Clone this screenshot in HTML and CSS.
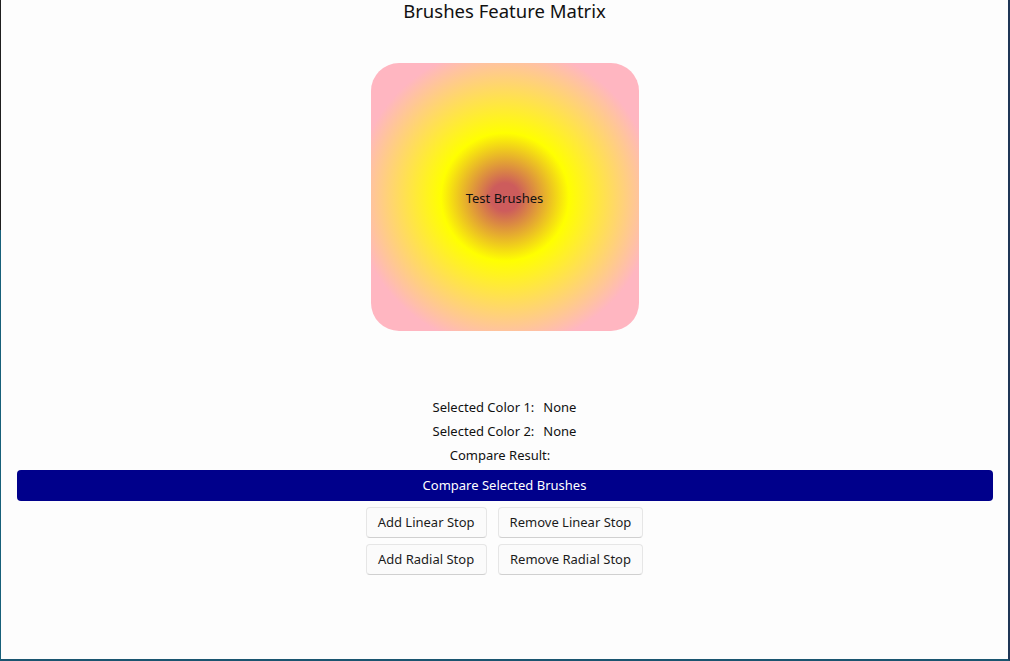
FILE: index.html
```html
<!DOCTYPE html>
<html lang="en">
<head>
<meta charset="utf-8">
<title>Brushes Feature Matrix</title>
<link rel="stylesheet" href="styles.css">
</head>
<body>
<div class="window">
  <div class="edge-dark"></div>
  <h1 class="title">Brushes Feature Matrix</h1>
  <div class="stage">
    <div class="brush-box"><span class="brush-label">Test Brushes</span></div>
  </div>
  <div class="info">
    <div class="info-row"><span>Selected Color 1:</span><span>None</span></div>
    <div class="info-row"><span>Selected Color 2:</span><span>None</span></div>
    <div class="info-row"><span>Compare Result:</span><span></span></div>
  </div>
  <button class="primary">Compare Selected Brushes</button>
  <div class="btn-grid">
    <button class="btn">Add Linear Stop</button>
    <button class="btn">Remove Linear Stop</button>
    <button class="btn">Add Radial Stop</button>
    <button class="btn">Remove Radial Stop</button>
  </div>
</div>
</body>
</html>
```

FILE: styles.css
```css
* { box-sizing: border-box; }
html, body {
  margin: 0;
  padding: 0;
  background: #fdfdfd;
}
body {
  font-family: "Segoe UI", "Noto Sans", "Open Sans", sans-serif;
  color: #1b1b1b;
  font-size: 13px;
}
.window {
  position: relative;
  width: 1010px;
  height: 661px;
  border-left: 1px solid #17607a;
  border-right: 2px solid #1e3555;
  border-bottom: 2px solid #1a5570;
  display: flex;
  flex-direction: column;
  align-items: center;
  padding: 0 16px;
}
.edge-dark {
  position: absolute;
  left: -1px;
  top: 0;
  width: 1px;
  height: 230px;
  background: #1f1f1f;
}
.title {
  margin: 0;
  font-size: 18.5px;
  font-weight: 400;
  line-height: 22px;
  height: 22px;
  color: #111;
}
.stage {
  margin-top: 41px;
}
.brush-box {
  width: 268px;
  height: 268px;
  border-radius: 28px;
  background: radial-gradient(circle farthest-corner at 50% 50%, #cd5c5c 0px, #cd5c5c 14px, #ffff00 64px, #ffb6c1 150px);
  display: flex;
  align-items: center;
  justify-content: center;
}
.brush-label {
  color: #111;
  font-size: 13px;
  line-height: 18px;
  margin-top: 2px;
}
.info {
  margin-top: 64px;
  display: flex;
  flex-direction: column;
  align-items: center;
}
.info-row {
  display: flex;
  gap: 9px;
  height: 24px;
  line-height: 24px;
  font-size: 13px;
  color: #111;
}
.primary {
  margin-top: 3px;
  width: 976px;
  height: 31px;
  border: none;
  border-radius: 4px;
  background: #00008b;
  color: #ffffff;
  font-family: inherit;
  font-size: 13px;
  padding: 0 0 2px;
}
.btn-grid {
  margin-top: 6px;
  display: grid;
  grid-template-columns: auto auto;
  column-gap: 11px;
  row-gap: 6px;
}
.btn {
  height: 31px;
  padding: 0 11px 1px;
  background: #fbfbfb;
  border: 1px solid #e6e6e6;
  border-bottom-color: #d0d0d0;
  border-radius: 4px;
  font-family: inherit;
  font-size: 13px;
  color: #1b1b1b;
}
```
